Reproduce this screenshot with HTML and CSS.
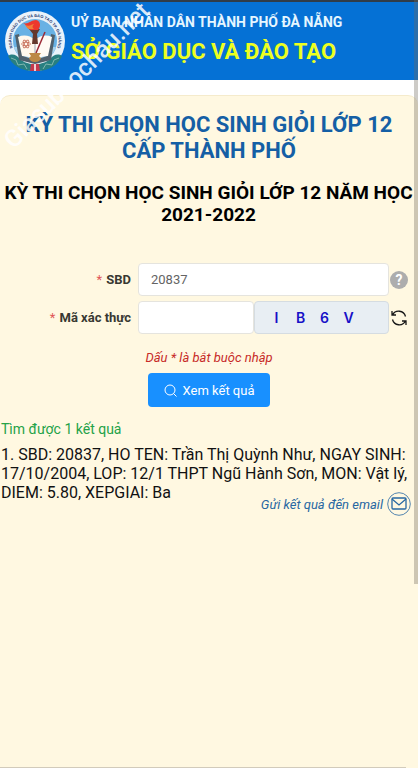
FILE: index.html
```html
<!DOCTYPE html>
<html lang="vi">
<head>
<meta charset="utf-8">
<meta name="viewport" content="width=device-width, initial-scale=1">
<title>Sở Giáo dục và Đào tạo</title>
<link rel="stylesheet" href="styles.css">
</head>
<body>
<header class="header">
  <svg class="logo" viewBox="0 0 62 62" aria-hidden="true">
    <defs><path id="ring" d="M10.500 42A23.500 23.500 0 1 1 51.500 42"/></defs>
    <circle cx="31" cy="31" r="30" fill="#e9f2fa"/>
    <circle cx="31" cy="31" r="22" fill="#68b1e4"/>
    <path d="M10 37h42a22 22 0 0 1-42 0z" fill="#a8d3ed"/>
    <text class="ring-text"><textPath href="#ring" startOffset="50%">NGÀNH GIÁO DỤC VÀ ĐÀO TẠO TP. ĐÀ NẴNG</textPath></text>
    <path d="M4 46c4-3 9-1 12 3 4 4 9 4 13 6l-2 6C16 60 8 55 4 46z" fill="#287f81"/>
    <path d="M58 46c-4-3-9-1-12 3-4 4-9 4-13 6l2 6c11-1 19-6 23-15z" fill="#287f81"/>
    <path d="M7 48l5 2 2 5 6-1 3 5M55 48l-5 2-2 5-6-1-3 5" fill="none" stroke="#80b7ae" stroke-width="1"/>
    <path d="M11 25l4-1 4 22 12 4 12-4 4-22 4 1-4 25-16 4-16-4z" fill="#51606c"/>
    <path d="M14 27q9-4 17 3v20q-6-4-13-4z" fill="#fff8ed"/>
    <path d="M48 27q-9-4-17 3v20q6-4 13-4z" fill="#fffaf4"/>
    <path d="M31 30v19" stroke="#9daab4"/>
    <g fill="none" stroke="#c66b55" stroke-width=".8"><ellipse cx="22" cy="34" rx="4.500" ry="1.800"/><ellipse cx="22" cy="34" rx="4.500" ry="1.800" transform="rotate(60 22 34)"/><ellipse cx="22" cy="34" rx="4.500" ry="1.800" transform="rotate(120 22 34)"/></g>
    <path d="M25 19h11l-3 5 1 10h-6l1-10z" fill="#64392d"/>
    <path d="M19 13c5 2 8-3 13-3 5 1 5 7 2 10h-7c-4-1-3-4-8-7z" fill="#ed382d"/>
    <path d="M21 15c5 2 7-1 9-1-2 2-2 4 0 5h-4c-3 0-3-2-5-4z" fill="#f17e39"/>
    <path d="M41 22L32 43" stroke="#9b2935" stroke-width="1.500"/>
    <path d="M25 43h12l-2 3 2 2q-1 4-6 4t-6-4l2-2z" fill="#bc8846"/>
    <path d="M27 54l8 0 1 7h-10z" fill="#c5384c"/>
    <path d="M31 54v7" stroke="#fff" stroke-width="1.500"/>
  </svg>
  <div class="names">
    <p class="parent-name">UỶ BAN NHÂN DÂN THÀNH PHỐ ĐÀ NẴNG</p>
    <p class="dept-name">SỞ GIÁO DỤC VÀ ĐÀO TẠO</p>
  </div>
</header>

<main class="panel">
  <h1 class="title">KỲ THI CHỌN HỌC SINH GIỎI LỚP 12 CẤP THÀNH PHỐ</h1>
  <h2 class="subtitle">KỲ THI CHỌN HỌC SINH GIỎI LỚP 12 NĂM HỌC 2021-2022</h2>
  <form class="form">
    <div class="row">
      <label class="label" for="sbd"><span class="star">*</span> SBD</label>
      <input class="field" id="sbd" type="text" value="20837">
      <button class="icon-button" type="button" aria-label="Trợ giúp"><span class="help">?</span></button>
    </div>
    <div class="row">
      <label class="label" for="code"><span class="star">*</span> Mã xác thực</label>
      <div class="code-group">
        <input class="field" id="code" type="text">
        <div class="captcha"><span>I</span><span>B</span><span>6</span><span>V</span></div>
      </div>
      <button class="icon-button" type="button" aria-label="Đổi mã">
        <svg width="16" height="16" viewBox="0 0 16 16" fill="none" stroke="#171717" stroke-width="1.300"><path d="M1 1v4h4M1.500 5A7 7 0 0 1 14.500 6.500M15 15v-4h-4M14.500 11A7 7 0 0 1 1.500 9.500"/></svg>
      </button>
    </div>
    <p class="note">Dấu * là bắt buộc nhập</p>
    <button class="submit" type="button">
      <svg width="13" height="13" viewBox="0 0 13 13" fill="none" stroke="#fff" stroke-width="1"><circle cx="6" cy="6" r="5"/><path d="M9.500 9.500l3 3"/></svg>
      Xem kết quả
    </button>
  </form>
  <section class="results">
    <p class="found">Tìm được 1 kết quả</p>
    <p class="result">1. SBD: 20837, HO TEN: Trần Thị Quỳnh Như, NGAY SINH: 17/10/2004, LOP: 12/1 THPT Ngũ Hành Sơn, MON: Vật lý, DIEM: 5.80, XEPGIAI: Ba</p>
    <a class="email" href="#email">Gửi kết quả đến email
      <svg width="24" height="24" viewBox="0 0 24 24" fill="none" stroke="#2767a2"><circle cx="12" cy="12" r="11.300" stroke-width=".8"/><rect x="5" y="6" width="14" height="11" rx="1" stroke-width="1.300"/><path d="M5 7l7 6 7-6" stroke-width="1.300"/></svg>
    </a>
  </section>
</main>
<div class="watermark" aria-hidden="true">Giasubaochau.net</div>
<div class="scroll-y"></div>
<div class="scroll-x"></div>
</body>
</html>
```
FILE: styles.css
```css
* { box-sizing: border-box; }
body {
  margin: 0;
  min-height: 100vh;
  display: flex;
  flex-direction: column;
  position: relative;
  overflow: hidden;
  background: #fff;
  color: #111;
  font-family: Roboto, "Liberation Sans", sans-serif;
}
p, h1, h2 { margin: 0; }
.header {
  display: flex;
  align-items: flex-start;
  gap: 5px;
  height: 80px;
  padding: 8px 4px;
  border-top: 2px solid #303c49;
  background: #0571d5;
}
.logo { width: 62px; height: 62px; flex: none; }
.ring-text { font: bold 4px "Liberation Sans", sans-serif; fill: #25366e; text-anchor: middle; }
.names { font-weight: 700; white-space: nowrap; }
.parent-name { color: #e5f6ff; font-size: 14px; line-height: 24px; }
.dept-name { color: #edff20; font-size: 22px; line-height: 36px; }
.panel {
  flex: 1;
  margin-top: 15px;
  padding-top: 16px;
  border-top: 1px solid #f5ebcc;
  border-radius: 10px 10px 0 0;
  background: #fff8e1;
}
.title {
  padding: 0 16px;
  color: #155fa5;
  font-size: 22px;
  line-height: 26px;
  text-align: center;
}
.subtitle {
  margin-top: 18px;
  padding: 0 4px 0 3px;
  color: #000;
  font-size: 19px;
  line-height: 22px;
  text-align: center;
}
.form {
  display: flex;
  flex-direction: column;
  align-items: center;
  gap: 5px;
  padding-top: 37px;
}
.row {
  width: 100%;
  display: grid;
  grid-template-columns: 131px 1fr 20px;
  align-items: center;
  padding-right: 9px;
}
.row .label + * { margin-left: 7px; }
.label { color: #383832; font-size: 13px; font-weight: 700; text-align: right; }
.star { margin-right: 1px; color: #df5757; font-weight: 400; }
.field {
  min-width: 0;
  height: 33px;
  padding: 0 12px;
  border: 1px solid #e5e4de;
  border-radius: 4px;
  background: #fff;
  color: #646464;
  font: 13px Roboto, sans-serif;
}
.code-group { display: grid; grid-template-columns: 116px 1fr; }
.captcha {
  display: grid;
  grid-template-columns: repeat(4, 24px);
  align-items: center;
  justify-content: center;
  padding-right: 18px;
  border: 1px solid #d5dce1;
  border-radius: 4px;
  background: #e8eef3;
  color: #1710c7;
  font: 600 14px Inter, sans-serif;
  text-align: center;
}
.icon-button {
  display: flex;
  align-items: center;
  justify-content: center;
  width: 20px;
  height: 24px;
  padding: 0;
  border: 0;
  background: none;
}
.help {
  width: 18px;
  height: 18px;
  border-radius: 50%;
  background: #adadad;
  color: #fff;
  font: bold 14px/18px Roboto, sans-serif;
}
.note { margin-top: 9px; color: #c72b28; font-size: 13px; font-style: italic; line-height: 20px; }
.submit {
  display: flex;
  align-items: center;
  gap: 6px;
  height: 34px;
  padding: 0 16px;
  border: 0;
  border-radius: 4px;
  background: #1890ff;
  color: #fff;
  font: 13px Roboto, sans-serif;
}
.results { display: flex; flex-direction: column; padding: 12px 2px 0 1px; }
.found { color: #24a248; font-size: 14px; line-height: 20px; }
.result { margin-top: 6px; font-size: 16px; line-height: 19px; }
.email {
  display: flex;
  align-items: center;
  align-self: flex-end;
  gap: 4px;
  margin: -10px 5px 0 0;
  color: #2767a2;
  font-size: 13px;
  font-style: italic;
  text-decoration: none;
}
.watermark {
  position: absolute;
  left: 8px;
  top: 132px;
  color: rgba(255, 255, 255, .85);
  font-size: 24px;
  font-weight: 500;
  line-height: 24px;
  white-space: nowrap;
  transform: rotate(-45deg);
  transform-origin: 0 50%;
  pointer-events: none;
}
.scroll-y {
  position: absolute;
  top: 0;
  right: 0;
  width: 4px;
  height: 76%;
  background: rgba(112, 106, 95, .35);
}
.scroll-x {
  position: absolute;
  left: 0;
  right: 12px;
  bottom: 0;
  height: 1px;
  background: #d2cbbb;
}
```
